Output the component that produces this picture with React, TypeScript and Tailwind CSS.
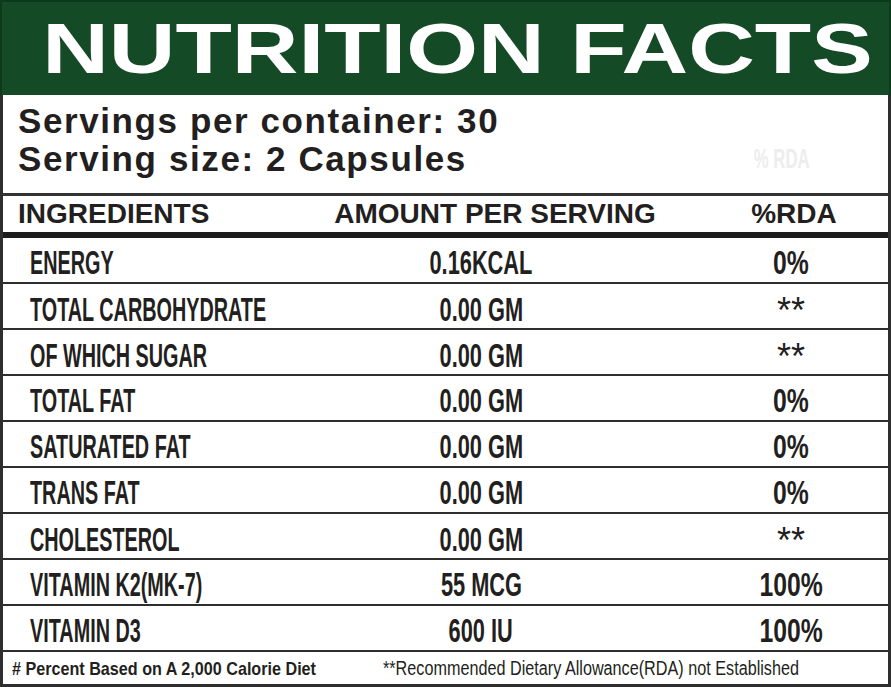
const rows: [string, string, string][] = [
  ["ENERGY", "0.16KCAL", "0%"],
  ["TOTAL CARBOHYDRATE", "0.00 GM", "**"],
  ["OF WHICH SUGAR", "0.00 GM", "**"],
  ["TOTAL FAT", "0.00 GM", "0%"],
  ["SATURATED FAT", "0.00 GM", "0%"],
  ["TRANS FAT", "0.00 GM", "0%"],
  ["CHOLESTEROL", "0.00 GM", "**"],
  ["VITAMIN K2(MK-7)", "55 MCG", "100%"],
  ["VITAMIN D3", "600 IU", "100%"],
];

function RdaValue({ value }: { value: string }) {
  if (value === "**") {
    return (
      <span className="inline-block text-[36px] leading-none font-normal pt-[3px]">
        **
      </span>
    );
  }
  return (
    <span className="inline-block text-[33px] leading-none font-bold scale-x-[0.75]">
      {value}
    </span>
  );
}

export default function App() {
  return (
    <div className="w-[891px] h-[687px] bg-white font-['Liberation_Sans',Arial,sans-serif] text-[#231f20] overflow-hidden">
      <div className="h-[95px] bg-[#154a27] border-x-2 border-t-2 border-[#0d3a1c] flex items-center justify-center pl-[24px]">
        <h1 className="inline-block text-[71px] leading-none font-bold text-white scale-x-[1.3]">
          NUTRITION FACTS
        </h1>
      </div>

      <div className="h-[592px] border-x-[3px] border-b-[3px] border-[#2e2e2e] flex flex-col">
        {/* serving info */}
        <div className="h-[101px] border-b-[3px] border-[#333] pt-[7px] pl-[15px] font-bold text-[35px] leading-[38px] tracking-[1.6px]">
          <div>Servings per container: 30</div>
          <div className="flex items-center">
            <span>Serving size: 2 Capsules</span>
            <span className="ml-auto mr-[60px] inline-block text-[28px] tracking-normal text-[#ededed] scale-x-[0.6]">
              % RDA
            </span>
          </div>
        </div>

        {/* column headings */}
        <div className="h-[42px] border-b-[6px] border-[#1c1c1c] grid grid-cols-[327px_330px_1fr] items-center font-bold text-[28px] leading-none">
          <div className="pl-[15px]">INGREDIENTS</div>
          <div className="text-center whitespace-nowrap">AMOUNT PER SERVING</div>
          <div className="pl-[40px] text-center">%RDA</div>
        </div>

        {rows.map(([name, amount, rda]) => (
          <div
            key={name}
            className="h-[46px] border-b-2 border-[#2e2e2e] grid grid-cols-[327px_302px_1fr] items-center pt-[6px]"
          >
            <div className="pl-[27px]">
              <span className="inline-block text-[33px] leading-none font-bold whitespace-nowrap origin-left scale-x-[0.6]">
                {name}
              </span>
            </div>
            <div className="text-center">
              <span className="inline-block text-[33px] leading-none font-bold whitespace-nowrap scale-x-[0.66]">
                {amount}
              </span>
            </div>
            <div className="pl-[62px] text-center">
              <RdaValue value={rda} />
            </div>
          </div>
        ))}

        {/* footnotes */}
        <div className="h-[32px] grid grid-cols-[380px_1fr] items-center leading-none">
          <div className="pl-[9px]">
            <span className="inline-block text-[19px] font-bold whitespace-nowrap origin-left scale-x-[0.85]">
              # Percent Based on A 2,000 Calorie Diet
            </span>
          </div>
          <div>
            <span className="inline-block text-[20px] whitespace-nowrap origin-left scale-x-[0.81]">
              **Recommended Dietary Allowance(RDA) not Established
            </span>
          </div>
        </div>
      </div>
    </div>
  );
}
